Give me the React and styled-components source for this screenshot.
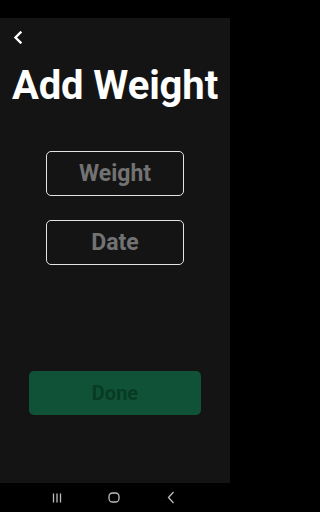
import React from "react";
import styled, { createGlobalStyle } from "styled-components";

const Global = createGlobalStyle`
  html, body { margin: 0; padding: 0; background: #000; }
  body { font-family: Roboto, "Liberation Sans", sans-serif; }
  * { box-sizing: border-box; }
`;

const Screen = styled.div`
  width: 230px;
  height: 512px;
  display: flex;
  flex-direction: column;
  background: #000;
`;

const StatusBar = styled.div`
  height: 18px;
  background: #000;
  flex: none;
`;

const Main = styled.main`
  flex: 1;
  background: #141414;
  display: flex;
  flex-direction: column;
  align-items: center;
`;

const TopBar = styled.div`
  align-self: stretch;
  height: 38px;
  display: flex;
  align-items: center;
  padding-left: 13px;
  padding-top: 1px;
`;

const BackButton = styled.button`
  background: none;
  border: none;
  padding: 0;
  width: 12px;
  height: 14px;
  display: flex;
  color: #fff;
`;

const Title = styled.h1`
  margin: 0;
  margin-top: 8px;
  color: #fff;
  font-family: Roboto, "Liberation Sans", sans-serif;
  font-weight: 700;
  font-size: 40px;
  line-height: 44px;
  letter-spacing: -0.1px;
  white-space: nowrap;
`;

const Fields = styled.div`
  display: flex;
  flex-direction: column;
  gap: 24px;
  margin-top: 43px;
`;

const Field = styled.div`
  width: 138px;
  height: 45px;
  border: 1.5px solid #e4e4e4;
  border-radius: 5px;
  display: flex;
  align-items: center;
  justify-content: center;
  color: #727272;
  font-weight: 700;
  font-size: 23px;
`;

const DoneButton = styled.button`
  margin-top: 106px;
  width: 172px;
  height: 44px;
  border: none;
  border-radius: 5px;
  background: #0f5237;
  color: #093a24;
  font-family: Roboto, "Liberation Sans", sans-serif;
  font-weight: 700;
  font-size: 20px;
  display: flex;
  align-items: center;
  justify-content: center;
  padding: 0;
`;

const NavBar = styled.nav`
  height: 29px;
  flex: none;
  background: #000;
  display: grid;
  grid-template-columns: repeat(3, 1fr);
  align-items: center;
  justify-items: center;
  padding: 0 30px 0 28px;
`;

const NavIcon = styled.svg`
  display: block;
  color: #bdbdbd;
`;

export default function App() {
  return (
    <>
      <Global />
      <Screen>
        <StatusBar />
        <Main>
          <TopBar>
            <BackButton aria-label="Back">
              <svg width="10" height="13" viewBox="0 0 10 13">
                <path d="M7.5 1.5 L2.5 6.5 L7.5 11.5" fill="none" stroke="#fff" strokeWidth="2.4" strokeLinecap="square" />
              </svg>
            </BackButton>
          </TopBar>
          <Title>Add Weight</Title>
          <Fields>
            <Field>Weight</Field>
            <Field>Date</Field>
          </Fields>
          <DoneButton>Done</DoneButton>
        </Main>
        <NavBar>
          <NavIcon width="10" height="10" viewBox="0 0 10 10">
            <g stroke="currentColor" strokeWidth="1.3">
              <line x1="1.5" y1="0.5" x2="1.5" y2="9.5" />
              <line x1="5" y1="0.5" x2="5" y2="9.5" />
              <line x1="8.5" y1="0.5" x2="8.5" y2="9.5" />
            </g>
          </NavIcon>
          <NavIcon width="12" height="11" viewBox="0 0 12 11">
            <rect x="1" y="1" width="10" height="9" rx="3.5" fill="none" stroke="currentColor" strokeWidth="1.3" />
          </NavIcon>
          <NavIcon width="8" height="13" viewBox="0 0 8 13">
            <path d="M6.5 1 L1.5 6.5 L6.5 12" fill="none" stroke="currentColor" strokeWidth="1.3" />
          </NavIcon>
        </NavBar>
      </Screen>
    </>
  );
}
